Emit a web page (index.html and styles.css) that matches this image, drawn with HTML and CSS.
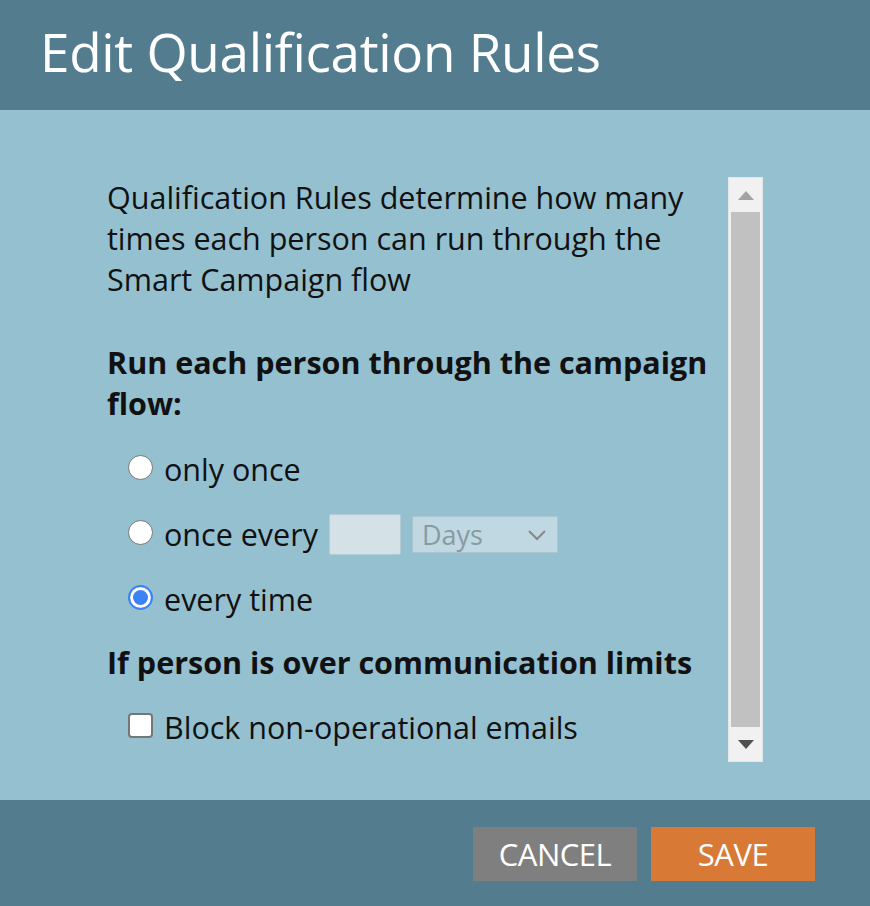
FILE: index.html
```html
<!DOCTYPE html>
<html lang="en">
<head>
    <meta charset="UTF-8">
    <meta name="viewport" content="width=device-width, initial-scale=1.0">
    <title>Edit Qualification Rules</title>
    <link rel="stylesheet" href="styles.css">
</head>
<body>
    <div class="dialog">
        <div class="dialog-header">
            <h1>Edit Qualification Rules</h1>
        </div>

        <div class="dialog-body">
            <div class="panel">
                <div class="panel-content">
                    <p class="intro">Qualification Rules determine how many times each person can run through the Smart Campaign flow</p>

                    <h2>Run each person through the campaign flow:</h2>

                    <label class="option">
                        <span class="radio"></span>
                        <span>only once</span>
                    </label>
                    <label class="option">
                        <span class="radio"></span>
                        <span>once every</span>
                        <span class="num-box"></span>
                        <span class="select-box">Days
                            <svg width="20" height="12" viewBox="0 0 20 12"><path d="M2 2 L10 10 L18 2" fill="none" stroke="#888" stroke-width="2"/></svg>
                        </span>
                    </label>
                    <label class="option">
                        <span class="radio checked"></span>
                        <span>every time</span>
                    </label>

                    <h2 class="limits">If person is over communication limits</h2>

                    <label class="option check-row">
                        <span class="checkbox"></span>
                        <span>Block non-operational emails</span>
                    </label>
                </div>

                <!-- fake scrollbar -->
                <div class="scrollbar">
                    <div class="arrow up"></div>
                    <div class="thumb"></div>
                    <div class="arrow down"></div>
                </div>
            </div>
        </div>

        <div class="dialog-footer">
            <button class="btn cancel">CANCEL</button>
            <button class="btn save">SAVE</button>
        </div>
    </div>
</body>
</html>
```

FILE: styles.css
```css
body {
    margin: 0;
    font-family: 'Open Sans', sans-serif;
    color: #111;
}

.dialog {
    width: 870px;
    height: 906px;
    display: flex;
    flex-direction: column;
}

.dialog-header {
    height: 110px;
    background: #537d8f;
    display: flex;
    align-items: center;
    padding-left: 40px;
    box-sizing: border-box;
}

.dialog-header h1 {
    margin: 0;
    font-size: 53px;
    font-weight: 400;
    color: #fff;
    letter-spacing: -0.3px;
    padding-bottom: 8px;
}

.dialog-body {
    flex: 1;
    background: #95c0d0;
    padding: 67px 0 0 107px;
}

.panel {
    display: flex;
    gap: 18px;
    height: 585px;
}

.panel-content {
    width: 603px;
    font-size: 30.5px;
    line-height: 41px;
}

.intro {
    margin: 0 0 42px;
}

h2 {
    margin: 0 0 13px;
    font-size: 30.5px;
    font-weight: 700;
    line-height: 41px;
}

h2.limits {
    margin: 10px 0 12px;
}

.option {
    display: flex;
    align-items: center;
    height: 65px;
    padding-left: 21px;
    gap: 11px;
}

.radio {
    width: 25px;
    height: 25px;
    border: 1px solid #767676;
    border-radius: 50%;
    background: #fff;
    margin-top: -5px;
    box-sizing: border-box;
    flex-shrink: 0;
}

.radio.checked {
    border: 2px solid #3b82f6;
    box-shadow: inset 0 0 0 3px #fff, inset 0 0 0 12px #3b82f6;
}

.checkbox {
    width: 25px;
    height: 25px;
    border: 2px solid #767676;
    border-radius: 4px;
    background: #fff;
    margin-top: -5px;
    box-sizing: border-box;
}

.num-box {
    width: 72px;
    height: 41px;
    background: #d4e2e8;
    border: 1px solid #b4cbd5;
    border-radius: 2px;
    box-sizing: border-box;
}

.select-box {
    width: 146px;
    height: 37px;
    background: #c0d8e1;
    border: 1px solid #aac6d1;
    box-sizing: border-box;
    display: flex;
    align-items: center;
    justify-content: space-between;
    padding: 0 10px 0 9px;
    color: #8a9aa2;
    font-size: 27px;
}

.scrollbar {
    width: 35px;
    background: #f1f1f1;
    border: 1px solid #e2e8ea;
    box-sizing: border-box;
    display: flex;
    flex-direction: column;
}

.arrow {
    height: 34px;
    display: flex;
    align-items: center;
    justify-content: center;
}

.arrow::before {
    content: '';
    border-left: 8px solid transparent;
    border-right: 8px solid transparent;
}

.arrow.up::before {
    border-bottom: 9px solid #a3a3a3;
}

.arrow.down::before {
    border-top: 9px solid #505050;
}

.thumb {
    flex: 1;
    background: #c1c1c1;
    margin: 0 2px;
}

.dialog-footer {
    height: 106px;
    background: #537d8f;
    display: flex;
    justify-content: flex-end;
    align-items: center;
    gap: 14px;
    padding: 2px 55px 0 0;
    box-sizing: border-box;
}

.btn {
    width: 164px;
    height: 54px;
    border: none;
    color: #fff;
    font-family: 'Open Sans', sans-serif;
    font-size: 31px;
    letter-spacing: -0.5px;
    cursor: pointer;
}

.btn.cancel {
    background: #7f7f7f;
}

.btn.save {
    background: #d87936;
}
```
